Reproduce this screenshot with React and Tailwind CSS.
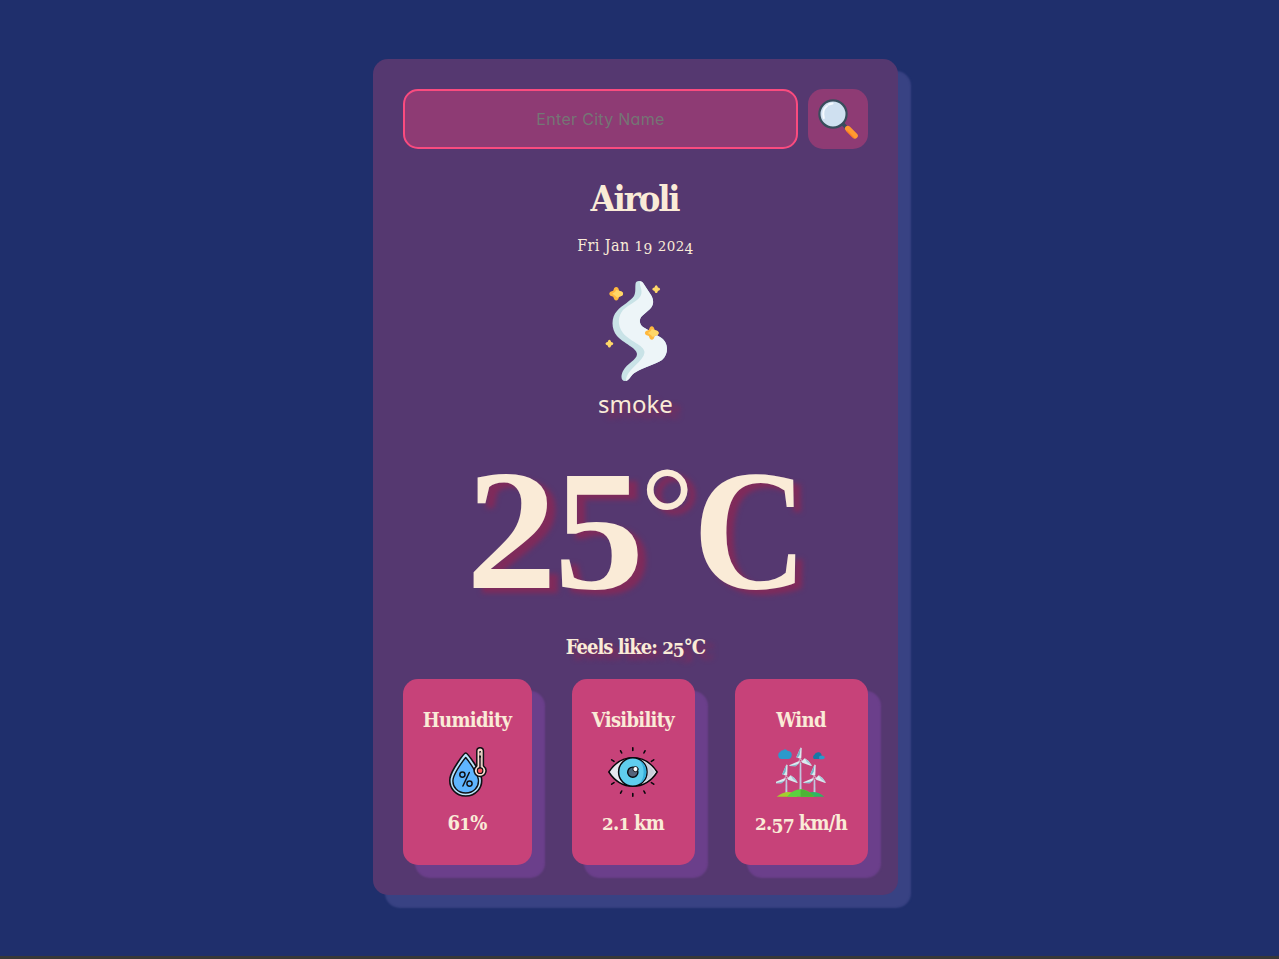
import React from "react";

const SERIF = "font-['DejaVu_Serif_Condensed','DejaVu_Serif',serif]";

// Sets digits as old-style figures: 0-2 at x-height, 3-5, 7 and 9 descending.
function OldStyle({ children }) {
  return String(children)
    .split(/(\d)/)
    .map((part, i) => {
      if (/^[012]$/.test(part)) return <span key={i} className="font-['DejaVu_Serif',serif] text-[0.84em] leading-[0]">{part}</span>;
      if (/^[34579]$/.test(part)) return <span key={i} className="align-[-0.17em] text-[0.96em] leading-[0]">{part}</span>;
      return part;
    });
}

function SearchIcon() {
  return (
    <svg viewBox="0 0 40 40" className="size-10">
      <path d="M25 25 29.5 30" stroke="#394d5c" strokeWidth="3.6" />
      <path d="M29.8 29.6 37 36.8" stroke="#ff9a30" strokeWidth="5.6" strokeLinecap="round" />
      <path d="M28.7 31.8 36 39" stroke="#ff8022" strokeWidth="1.3" />
      <circle cx="15" cy="15" r="13.6" fill="#cfe0f0" stroke="#394d5c" strokeWidth="2.2" />
      <path d="M5.8 19C4.4 14 5.8 9.2 9 7M10.7 5.6 14.5 4.6" fill="none" stroke="#f5faff" strokeWidth="2.1" strokeLinecap="round" />
    </svg>
  );
}

function Sparkle({ x, y, r, dark }) {
  return (
    <g transform={`translate(${x} ${y}) scale(${r / 7})`}>
      <path d="M-2-5.6Q0-8 2-5.6L3-3 5.8-2Q8 0 5.8 2L3 3 2 5.6Q0 8-2 5.6L-3 3-5.8 2Q-8 0-5.8-2L-3-3Z" fill={dark ? "#ffb83e" : "#ffd768"} />
      {dark && <path d="M0-4 3-3 5.8-2Q8 0 5.8 2L3 3 1 4-1 2-4 0-1-2Z" fill="#ffd768" />}
    </g>
  );
}

function SmokeIcon() {
  return (
    <svg viewBox="0 0 100 100" className="size-[100px]">
      <path d="M49.5 3C49.5-.5 54.5-1 57 2L65 14C68 19 68 24 64 28L56 35C53 38 53 43 57 46L74 56C83 61 83 73 76 79C70 83 56 87 50 91C44 94 44 100 39 100C35 100 34.5 95 37 90C41 82 51 79 51 73C51 67 37 62 31 55C25 48 25 36 31 30C36 24 45 20 48 15C50 11 49 7 49.5 3Z" fill="#c9e3e7" />
      <path d="M54 .2C55.5.2 56.5 1 57.5 2.5L65 14C68 19 68 24 64 28L56 35C53 38 53 43 57 46L74 56C83 61 83 73 76 79C70 83 56 87 50 91C44 94 44 99 40 100C40 88 58 81 58.5 71C58 64 43 60 37 52C31 44 32 35 37 29C43 23 53 20 55 14C57 9 53 4 54 .2Z" fill="#edf5f8" />
      <Sparkle x={30.2} y={12.7} r={7} dark />
      <Sparkle x={65.8} y={52} r={7} dark />
      <Sparkle x={70.2} y={8.2} r={4} />
      <Sparkle x={23.4} y={62.7} r={4} />
    </svg>
  );
}

function HumidityIcon() {
  return (
    <svg viewBox="0 0 50 50" className="size-[50px]" fill="none" strokeLinecap="round" strokeLinejoin="round">
      <path d="M23.7 6C25.5 6 38 23 39.5 31C41 41 33.5 49 23.7 49C13.9 49 6.5 41 8 31C9.5 23 21.9 6 23.7 6Z" fill="#b9e4fb" stroke="#101014" strokeWidth="1.6" />
      <path d="M23.7 10.5C27.5 15 35 26 36.3 32C37.5 40 31.5 46 23.7 46C15.9 46 9.9 40 11.1 32C12.4 26 19.9 15 23.7 10.5Z" fill="#5fb5ff" stroke="#101014" strokeWidth="1.4" />
      <circle cx="20.4" cy="27.6" r="2.6" stroke="#101014" strokeWidth="1.5" />
      <circle cx="27.5" cy="36.6" r="2.6" stroke="#101014" strokeWidth="1.5" />
      <path d="M27.3 25.5 20.9 39" stroke="#101014" strokeWidth="1.5" />
      <path d="M34.8 4C34.8-.4 41.4-.4 41.4 4V18.8C46.4 22.7 43.6 29.4 38.1 29.4C32.6 29.4 29.8 22.7 34.8 18.8Z" fill="#fbdfd3" stroke="#101014" strokeWidth="1.5" />
      <path d="M38.1 5V21" stroke="#101014" strokeWidth="2" />
      <path d="M38.1 6V8" stroke="#fbdfd3" strokeWidth="1.5" />
      <path d="M38.1 11V20" stroke="#95727b" strokeWidth="1" />
      <circle cx="38.1" cy="23.7" r="2.8" fill="#ff565e" stroke="#101014" strokeWidth="1.1" />
    </svg>
  );
}

function EyeIcon() {
  return (
    <svg viewBox="0 0 50 50" className="size-[50px]" fill="none" strokeLinecap="round" strokeLinejoin="round">
      <path d="M.8 25C7 15.5 15 10.8 25 10.8S43 15.5 49.2 25C43 34.5 35 39.2 25 39.2S7 34.5.8 25Z" fill="#e5e8ef" stroke="#08080c" strokeWidth="1.5" />
      <path d="M37 15C42 18 44 21 47 25C44 29 42 32 37 35Z" fill="#cbd0db" />
      <circle cx="24.8" cy="25" r="14.2" fill="#60ceee" stroke="#08080c" strokeWidth="1.5" />
      <path d="M31.5 13.2A13.5 13.5 0 0 1 31.5 36.8C37 31 37 19 31.5 13.2Z" fill="#36afdb" />
      <circle cx="24.8" cy="25.2" r="5.1" fill="#54637a" stroke="#08080c" strokeWidth="1.4" />
      <circle cx="27.5" cy="22.1" r="2.6" fill="#fff" stroke="#08080c" strokeWidth="0.9" />
      <path d="M24.8.8V3.4M24.8 46.6V49.2M12.6 3.8 13.7 6M37 3.8 35.9 6M12.6 46.2 13.7 44M37 46.2 35.9 44M3.7 12.8 6 14.3M45.7 12.8 43.4 14.3M3.7 37.2 6 35.7M45.7 37.2 43.4 35.7" stroke="#08080c" strokeWidth="1.6" />
    </svg>
  );
}

function Turbine({ x, y, bottom }) {
  return (
    <g>
      <path d={`M${x - 0.8} ${y + 2}H${x + 0.8}L${x + 1} ${bottom}H${x - 1}Z`} fill="#c3c6df" />
      <g transform={`translate(${x} ${y})`}>
        <path d="M-.4-2-4.2-3.5 0-13.3 1.2-12.8.8-2.5Z" fill="#dce9ef" />
        <path d="M-4.2-3.5 0-13.3-.8-6-2.7-3Z" fill="#75b3c6" />
        <path d="M1.4.2 4.2-2.5 8 .2 11.3 4.7 10.7 5.4 1.7 2Z" fill="#dce9ef" />
        <path d="M4.2-2.5 8 .2 11.3 4.7 6.3 1.3Z" fill="#a5cbd8" />
        <path d="M-1.3.3-1 2-5 5.6-11.3 5.4-10.8 4.2Z" fill="#dce9ef" />
        <path d="M-1.3 3-5 5.6-11.3 5.4-5 4Z" fill="#83b8ca" />
        <circle r="1.3" fill="#cf4b7f" stroke="#d8d8e6" strokeWidth="0.8" />
      </g>
    </g>
  );
}

function WindIcon() {
  return (
    <svg viewBox="0 0 50 50" className="size-[50px]">
      <path d="M5 12A3.9 3.9 0 0 1 4.6 4.6Q5.5 3 7 3.4Q9 1.2 11.4 3.7Q15.8 4 15.8 8.1Q15.4 12 12 12Z" fill="#2c99cb" />
      <path d="M38 12A2.5 2.5 0 0 1 38.2 8Q39.6 4.7 43 5.3Q46 6.3 45.5 9L43 12Z" fill="#1878a6" />
      <path d="M43.8 12.2A2 2 0 0 1 44 8.8H46.5Q48.7 9 48.7 10.5T46.5 12.2Z" fill="#2c99cb" />
      <Turbine x={24.5} y={13.7} bottom={44} />
      <Turbine x={10.4} y={30.7} bottom={47} />
      <Turbine x={38.5} y={30.7} bottom={47} />
      <path d="M.7 49.7Q10 42 21 47V49.7Z" fill="#a4cf2e" />
      <path d="M48.3 49.7Q40 42 28 47V49.7Z" fill="#2db662" />
      <path d="M10.8 49.7Q24.5 35 38.4 49.7Z" fill="#5ad23f" />
      <path d="M24.6 42.3Q32 43 38.4 49.7H24.6Z" fill="#4eb335" />
    </svg>
  );
}

function StatCard({ width, title, value, icon }) {
  return (
    <div className={`flex h-[186px] flex-col items-center rounded-[15px] bg-[#c74279] pr-px pt-[27px] font-bold shadow-[12.5px_12.5px_2px_#6b3f8b] ${width}`}>
      <h3 className="h-[28px] whitespace-nowrap text-[20px] leading-[28px] tracking-[-0.7px]">{title}</h3>
      <div className="mt-[13px]">{icon}</div>
      <p className="mt-[12px] h-[28px] whitespace-nowrap text-[20px] leading-[28px] tracking-[-0.7px] [word-spacing:-1px]">
        <OldStyle>{value}</OldStyle>
      </p>
    </div>
  );
}

export default function App() {
  return (
    <div className={`flex h-[959px] flex-col overflow-hidden bg-[#1f2f6c] text-[#faebd7] ${SERIF}`}>
      <main className="ml-[373px] mt-[59px] flex h-[836px] w-[525px] flex-col items-center rounded-[15px] bg-[#553870] p-[30px] shadow-[12.5px_12.5px_2px_#384283]">
        <div className="flex w-full gap-[10px]">
          <input
            placeholder="Enter City Name"
            className="h-[60px] w-[395px] rounded-[15px] border-2 border-[#fa4b7f] bg-[#8e3b74] text-center font-['Inter',sans-serif] text-[16px] tracking-[0.3px] [font-feature-settings:'cv11'] placeholder:text-[#757575] focus:outline-none"
          />
          <button aria-label="Search" className="flex size-[60px] items-center justify-center rounded-[15px] bg-[#8e3b74]">
            <SearchIcon />
          </button>
        </div>
        <h1 className="mt-[24px] h-[50px] pr-[2px] text-[36px] font-bold leading-[50px] tracking-[-2.1px]">Airoli</h1>
        <p className="mt-[11px] h-[24px] whitespace-nowrap text-[16px] leading-[24px] tracking-[0.4px]"><OldStyle>Fri Jan 19 2024</OldStyle></p>
        <div className="mt-[23px] h-[100px]"><SmokeIcon /></div>
        <p className="mt-[5px] h-[36px] font-['Noto_Sans',sans-serif] text-[24px] leading-[36px] [text-shadow:8px_5px_5px_#802b5b]">smoke</p>
        <div className="mt-[28px] flex h-[160px] w-[330px] whitespace-nowrap font-['Liberation_Serif',serif] text-[172px] font-bold leading-[160px] [text-shadow:8px_5px_5px_#802b5b]">
          <span className="w-[85px] origin-right scale-x-[1.06]">2</span>
          <span className="w-[83px] origin-center scale-x-[1.05]">5</span>
          <span className="-mt-[17px] w-[57px] pl-[2px] text-[134px] font-normal">°</span>
          <span className="-ml-[3px] w-[100px] origin-left scale-x-[0.92]">C</span>
        </div>
        <p className="mt-[24px] h-[26px] whitespace-nowrap text-[20px] font-bold leading-[26px] tracking-[-1px] [text-shadow:8px_5px_5px_#802b5b]">
          <OldStyle>Feels like: 25°C</OldStyle>
        </p>
        <div className="mt-[19px] flex w-full justify-between">
          <StatCard width="w-[129px]" title="Humidity" value="61%" icon={<HumidityIcon />} />
          <StatCard width="w-[123px]" title="Visibility" value="2.1 km" icon={<EyeIcon />} />
          <StatCard width="w-[133px]" title="Wind" value="2.57 km/h" icon={<WindIcon />} />
        </div>
      </main>
      <div className="mt-auto h-[3px] shrink-0 bg-[#383838]" />
    </div>
  );
}
